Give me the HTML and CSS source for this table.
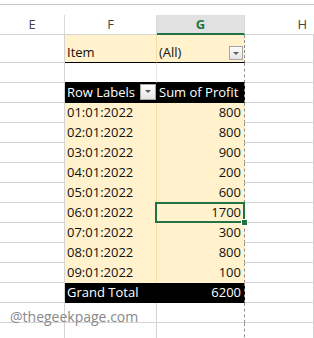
FILE: index.html
```html
<!DOCTYPE html>
<html lang="en">
<head>
  <meta charset="UTF-8">
  <title>Profit by date</title>
  <link rel="stylesheet" href="styles.css">
</head>
<body>
  <div class="topbar"></div>

  <div class="sheet">
    <div class="col-head">E</div>
    <div class="col-head">F</div>
    <div class="col-head col-head--active">G</div>
    <div class="col-head col-head--edge">H</div>

    <div class="cell"></div>
    <div class="cell pv pv-f rule-below">Item</div>
    <div class="cell pv pv-g rule-below split"><span>(All)</span><span class="dd"></span></div>
    <div class="cell"></div>

    <div class="cell"></div>
    <div class="cell blank-f rule-below"></div>
    <div class="cell pv-g blank-g rule-below"></div>
    <div class="cell"></div>

    <div class="cell"></div>
    <div class="cell dark split"><span>Row Labels</span><span class="dd dd--head"></span></div>
    <div class="cell dark pv-g">Sum of Profit</div>
    <div class="cell"></div>

    <div class="cell"></div>
    <div class="cell pv pv-f">01:01:2022</div>
    <div class="cell pv pv-g num">800</div>
    <div class="cell"></div>

    <div class="cell"></div>
    <div class="cell pv pv-f">02:01:2022</div>
    <div class="cell pv pv-g num">800</div>
    <div class="cell"></div>

    <div class="cell"></div>
    <div class="cell pv pv-f">03:01:2022</div>
    <div class="cell pv pv-g num">900</div>
    <div class="cell"></div>

    <div class="cell"></div>
    <div class="cell pv pv-f">04:01:2022</div>
    <div class="cell pv pv-g num">200</div>
    <div class="cell"></div>

    <div class="cell"></div>
    <div class="cell pv pv-f">05:01:2022</div>
    <div class="cell pv pv-g num">600</div>
    <div class="cell"></div>

    <div class="cell"></div>
    <div class="cell pv pv-f">06:01:2022</div>
    <div class="cell pv pv-g num sel">1700</div>
    <div class="cell"></div>

    <div class="cell"></div>
    <div class="cell pv pv-f">07:01:2022</div>
    <div class="cell pv pv-g num">300</div>
    <div class="cell"></div>

    <div class="cell"></div>
    <div class="cell pv pv-f">08:01:2022</div>
    <div class="cell pv pv-g num">800</div>
    <div class="cell"></div>

    <div class="cell"></div>
    <div class="cell pv pv-f">09:01:2022</div>
    <div class="cell pv pv-g num">100</div>
    <div class="cell"></div>

    <div class="cell"></div>
    <div class="cell dark">Grand Total</div>
    <div class="cell dark pv-g num">6200</div>
    <div class="cell"></div>

    <div class="cell"></div>
    <div class="cell"></div>
    <div class="cell pv-g"></div>
    <div class="cell"></div>

    <div class="cell"></div>
    <div class="cell"></div>
    <div class="cell pv-g"></div>
    <div class="cell"></div>
  </div>

  <div class="watermark">@thegeekpage.com</div>
</body>
</html>
```

FILE: styles.css
```css
body {
  margin: 0;
  position: relative;
  overflow: hidden;
  background-color: #ffffff;
  font-family: 'Open Sans', 'Noto Sans', sans-serif;
  font-size: 13px;
  color: #111;
}
.topbar {
  height: 5px;
  border-bottom: 1px solid #c6c6c6;
  box-sizing: border-box;
  margin-bottom: 10px;
}
.sheet {
  display: grid;
  grid-template-columns: 65px 92px 88px minmax(0, 1fr);
  grid-template-rows: 20px 28px;
  grid-auto-rows: 20px;
  overflow: hidden;
}
.col-head {
  box-sizing: border-box;
  border-right: 1px solid #dadada;
  border-bottom: 1px solid #d4d4d4;
  text-align: center;
  line-height: 19px;
  color: #444;
}
.col-head--active {
  background-color: #e1e1e1;
  color: #217346;
  font-weight: bold;
  border-bottom: 2px solid #217346;
  line-height: 18px;
}
/* H is cut off by the window, so its label sits near the right edge */
.col-head--edge {
  border-right: none;
  text-align: right;
  padding-right: 7px;
}
.cell {
  box-sizing: border-box;
  display: flex;
  align-items: flex-end;
  padding: 0 3px 0 2px;
  line-height: 19px;
  white-space: nowrap;
  border-right: 1px solid #d4d4d4;
  border-bottom: 1px solid #d4d4d4;
}
.pv {
  background-color: #fff2cc;
  border-bottom-color: #fff2cc;
}
.pv-f {
  border-right-color: #f6dc9c;
}
.pv-g {
  border-right: 1px dashed #8f8f8f;
}
.blank-f {
  border-right-color: #e8e8e8;
}
.rule-below {
  border-bottom-color: #000;
}
.dark {
  background-color: #000;
  color: #fff;
  border-bottom-color: #000;
  border-right-color: #000;
}
.dark.pv-g {
  border-right: 1px dashed #8f8f8f;
}
.num {
  justify-content: flex-end;
}
.split {
  justify-content: space-between;
}

/* filter dropdown buttons */
.dd {
  box-sizing: border-box;
  width: 14px;
  height: 14px;
  margin: 0 -2px 2px 0;
  border: 1px solid #a6a6a6;
  background: linear-gradient(#fdfdfd, #e4e4e4);
  display: flex;
  align-items: center;
  justify-content: center;
}
.dd::after {
  content: "";
  border-left: 3px solid transparent;
  border-right: 3px solid transparent;
  border-top: 3px solid #5a5a5a;
}
.dd--head {
  width: 16px;
  height: 16px;
  margin: 0 -3px 2px 0;
  align-self: center;
}

/* active cell */
.sel {
  position: relative;
}
.sel::before {
  content: "";
  position: absolute;
  top: -1px;
  left: -2px;
  right: -1px;
  bottom: -1px;
  border: 2px solid #217346;
}
.sel::after {
  content: "";
  position: absolute;
  right: -4px;
  bottom: -4px;
  width: 5px;
  height: 5px;
  background-color: #217346;
  border: 1px solid #fff;
}

.watermark {
  position: absolute;
  left: 10px;
  top: 310px;
  font-size: 14px;
  line-height: 14px;
  color: #888;
}
```
